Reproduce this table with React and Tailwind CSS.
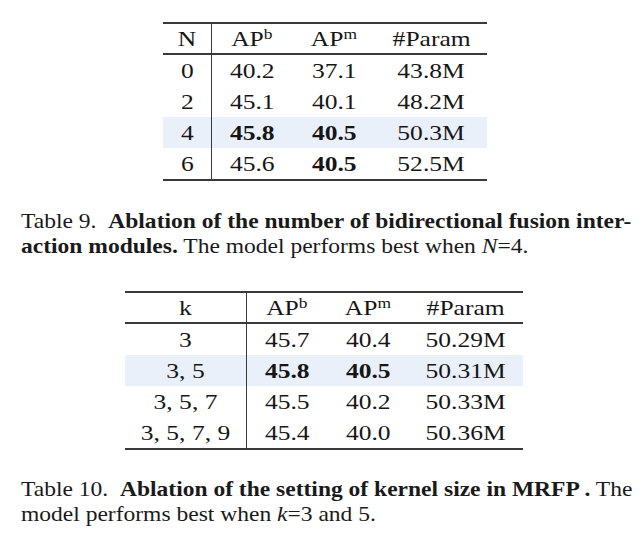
import React from "react";

const serif = { fontFamily: '"Liberation Serif", "Times New Roman", serif' };

function T({ children, bold }) {
  return (
    <span className={`inline-block scale-x-[1.16] ${bold ? "font-bold" : ""}`}>{children}</span>
  );
}

function Sup({ base, sup }) {
  return (
    <T>
      {base}
      <span className="text-[15px] relative -top-[7px] align-baseline leading-none">{sup}</span>
    </T>
  );
}

function Table({ cols, ml, w, rows, header }) {
  return (
    <div
      className={`${ml} ${w} border-t-2 border-b-2 border-[#3a3a3a] text-[22px] text-[#161616]`}
    >
      <div className={`grid ${cols} h-[31px] items-center border-b-2 border-[#3a3a3a] leading-none`}>
        <div className="text-center border-r border-[#3a3a3a] h-full flex items-center justify-center">
          <T>{header}</T>
        </div>
        <div className="text-center"><Sup base="AP" sup="b" /></div>
        <div className="text-center"><Sup base="AP" sup="m" /></div>
        <div className="text-center"><T>#Param</T></div>
      </div>
      {rows.map((r, i) => (
        <div
          key={i}
          className={`grid ${cols} h-[31px] items-center leading-none ${r[4] ? "bg-[#e9f0fa]" : ""}`}
        >
          <div className="text-center border-r border-[#3a3a3a] h-full flex items-center justify-center">
            <T>{r[0]}</T>
          </div>
          <div className="text-center"><T bold={r[4]}>{r[1]}</T></div>
          <div className="text-center"><T bold={r[5]}>{r[2]}</T></div>
          <div className="text-center"><T>{r[3]}</T></div>
        </div>
      ))}
    </div>
  );
}

function Caption({ mt, line1, line2 }) {
  return (
    <div className={`${mt} ml-[21px] h-[50px] text-[21px] leading-[25px] text-[#1a1a1a]`}>
      <div className="w-[545px] origin-left scale-x-[1.12]">
        <div className="whitespace-nowrap text-justify [text-align-last:justify]">{line1}</div>
        <div className="whitespace-nowrap">{line2}</div>
      </div>
    </div>
  );
}

export default function App() {
  const rows1 = [
    ["0", "40.2", "37.1", "43.8M", false, false],
    ["2", "45.1", "40.1", "48.2M", false, false],
    ["4", "45.8", "40.5", "50.3M", true, true],
    ["6", "45.6", "40.5", "52.5M", false, true],
  ];
  const rows2 = [
    ["3", "45.7", "40.4", "50.29M", false, false],
    ["3, 5", "45.8", "40.5", "50.31M", true, true],
    ["3, 5, 7", "45.5", "40.2", "50.33M", false, false],
    ["3, 5, 7, 9", "45.4", "40.0", "50.36M", false, false],
  ];
  return (
    <div className="w-[642px] h-[535px] bg-white overflow-hidden pt-[22px]" style={serif}>
      <Table
        header="N"
        cols="grid-cols-[49px_80px_84px_111px]"
        ml="ml-[163px]"
        w="w-[324px]"
        rows={rows1}
      />
      <Caption
        mt="mt-[28px]"
        line1={
          <>
            Table 9.&nbsp; <b>Ablation of the number of bidirectional fusion inter-</b>
          </>
        }
        line2={
          <>
            <b>action modules.</b> The model performs best when <i>N</i>=4.
          </>
        }
      />
      <div className="mt-[32px]">
        <Table
          header="k"
          cols="grid-cols-[122px_80px_82px_114px]"
          ml="ml-[125px]"
          w="w-[398px]"
          rows={rows2}
        />
      </div>
      <Caption
        mt="mt-[27px]"
        line1={
          <>
            Table 10.&nbsp; <b>Ablation of the setting of kernel size in MRFP .</b> The
          </>
        }
        line2={
          <>
            model performs best when <i>k</i>=3 and 5.
          </>
        }
      />
    </div>
  );
}
